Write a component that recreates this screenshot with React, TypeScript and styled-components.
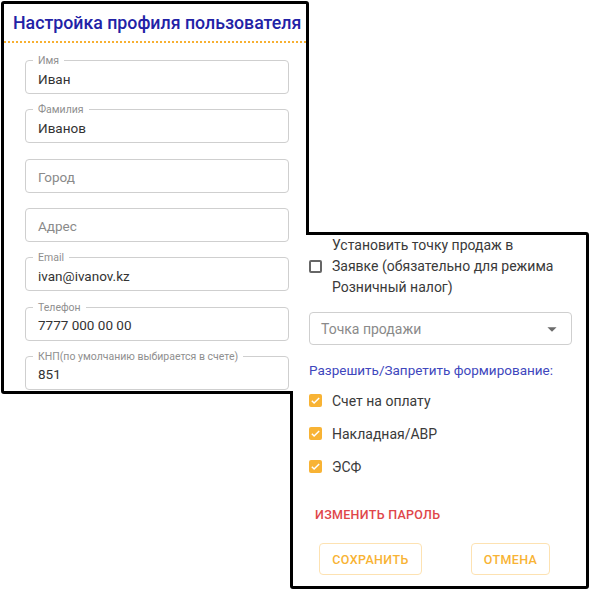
import React from 'react';
import styled, { createGlobalStyle } from 'styled-components';

const GlobalStyle = createGlobalStyle`
    html, body {
        margin: 0;
        padding: 0;
        background: #fff;
    }
    body {
        font-family: Roboto, 'Noto Sans', 'Liberation Sans', sans-serif;
        color: #333;
    }
    * {
        box-sizing: border-box;
    }
`;

// two screen clips laid over each other, like windows on a desktop
const Canvas = styled.div`
    width: 590px;
    height: 590px;
    padding: 1px 0 0 1px;
    display: grid;
    grid-template-columns: 289px 19px 280px;
    grid-template-rows: 231px 162px 195px;
`;

const Panel = styled.section`
    border: 3px solid #000;
    border-radius: 3px;
    background: #fff;
    overflow: hidden;
    display: flex;
    flex-direction: column;
`;

const ProfilePanel = styled(Panel)`
    grid-column: 1 / 3;
    grid-row: 1 / 3;
    z-index: 1;
`;

const OptionsPanel = styled(Panel)`
    grid-column: 2 / 4;
    grid-row: 2 / 4;
    z-index: 2;
    padding: 0 14px 0 16px;
`;

// hides the inner borders where the two clips overlap
const Seam = styled.div`
    grid-column: 2;
    grid-row: 2;
    z-index: 3;
    background: #fff;
    clip-path: polygon(
        0 0,
        calc(100% - 3px) 0,
        calc(100% - 3px) 3px,
        100% 3px,
        100% 100%,
        3px 100%,
        3px calc(100% - 3px),
        0 calc(100% - 3px)
    );
`;

const Title = styled.h2`
    margin: 0;
    padding: 7px 0 6px 9px;
    font-size: 17.75px;
    line-height: 24px;
    font-weight: 500;
    color: #2222a6;
    white-space: nowrap;
    border-bottom: 2px dotted #f7b031;
`;

const FieldList = styled.div`
    display: flex;
    flex-direction: column;
    gap: 15.33px;
    padding: 17px 0 0 21px;
`;

const Field = styled.div`
    position: relative;
    width: 264px;
    height: 34px;
    flex: none;
    border: 1px solid #cfcfcf;
    border-radius: 4px;
    display: flex;
    align-items: center;
    padding: 3px 12px 0;
    font-size: 13.5px;
    color: #333;
`;

const FieldLabel = styled.span`
    position: absolute;
    top: -7px;
    left: 7px;
    padding: 0 5px;
    background: #fff;
    font-size: 10.5px;
    line-height: 13px;
    color: #8f8f8f;
    white-space: nowrap;
`;

const Placeholder = styled.span`
    color: #8a8a8a;
`;

const CheckRow = styled.label<{ height?: number }>`
    display: flex;
    align-items: center;
    gap: 10px;
    height: ${p => (p.height ? `${p.height}px` : 'auto')};
    font-size: 14px;
    color: #3a3a3a;
`;

const BoxMark = styled.span<{ checked?: boolean }>`
    width: 13px;
    height: 13px;
    flex: none;
    border-radius: 2px;
    display: flex;
    align-items: center;
    justify-content: center;
    background: ${p => (p.checked ? '#f8b334' : '#fff')};
    border: ${p => (p.checked ? 'none' : '2px solid #666')};
`;

const RetailText = styled.span`
    line-height: 21px;
`;

const Select = styled.div`
    margin-top: 14px;
    height: 33px;
    border: 1px solid #cfcfcf;
    border-radius: 4px;
    display: flex;
    align-items: center;
    justify-content: space-between;
    padding: 1px 8px 0 11px;
    font-size: 14px;
    color: #8a8a8a;
`;

const SectionTitle = styled.div`
    margin-top: 15px;
    margin-bottom: 4px;
    font-size: 13.5px;
    line-height: 20px;
    color: #4047bd;
`;

const LinkButton = styled.div`
    margin-top: 17px;
    height: 28px;
    display: flex;
    align-items: center;
    padding-left: 6px;
    font-size: 12.5px;
    font-weight: 500;
    letter-spacing: 0.3px;
    color: #e0464a;
`;

const ButtonRow = styled.div`
    margin-top: 15px;
    display: flex;
    gap: 49px;
    padding-left: 10px;
`;

const OutlineButton = styled.button<{ w: number }>`
    width: ${p => p.w}px;
    height: 32px;
    border: 1px solid #fde2b2;
    border-radius: 4px;
    background: #fff;
    font-family: inherit;
    font-size: 12.5px;
    font-weight: 500;
    letter-spacing: 0.4px;
    color: #f8b334;
    padding: 0;
`;

const Tick = () => (
    <svg width="11" height="11" viewBox="0 0 24 24">
        <path d="M4 12.5l5 5L20 6.5" fill="none" stroke="#fff" strokeWidth="3.2" />
    </svg>
);

const ArrowDrop = () => (
    <svg width="22" height="22" viewBox="0 0 24 24">
        <path d="M7 10l5 5 5-5z" fill="#6b6b6b" />
    </svg>
);

const fields = [
    { label: 'Имя', value: 'Иван' },
    { label: 'Фамилия', value: 'Иванов' },
    { placeholder: 'Город' },
    { placeholder: 'Адрес' },
    { label: 'Email', value: 'ivan@ivanov.kz' },
    { label: 'Телефон', value: '7777 000 00 00' },
    { label: 'КНП(по умолчанию выбирается в счете)', value: '851' },
];

const documents = ['Счет на оплату', 'Накладная/АВР', 'ЭСФ'];

const App = () => {
    return (
        <>
            <GlobalStyle />
            <Canvas>
                <ProfilePanel>
                    <Title>Настройка профиля пользователя</Title>
                    <FieldList>
                        {fields.map((f, i) => (
                            <Field key={i}>
                                {f.label && <FieldLabel>{f.label}</FieldLabel>}
                                {f.value ? f.value : <Placeholder>{f.placeholder}</Placeholder>}
                            </Field>
                        ))}
                    </FieldList>
                </ProfilePanel>
                <Seam />
                <OptionsPanel>
                    <CheckRow>
                        <BoxMark />
                        <RetailText>
                            Установить точку продаж в
                            <br />
                            Заявке (обязательно для режима
                            <br />
                            Розничный налог)
                        </RetailText>
                    </CheckRow>
                    <Select>
                        Точка продажи
                        <ArrowDrop />
                    </Select>
                    <SectionTitle>Разрешить/Запретить формирование:</SectionTitle>
                    {documents.map(d => (
                        <CheckRow key={d} height={33}>
                            <BoxMark checked>
                                <Tick />
                            </BoxMark>
                            {d}
                        </CheckRow>
                    ))}
                    <LinkButton>ИЗМЕНИТЬ ПАРОЛЬ</LinkButton>
                    <ButtonRow>
                        <OutlineButton w={103}>СОХРАНИТЬ</OutlineButton>
                        <OutlineButton w={79}>ОТМЕНА</OutlineButton>
                    </ButtonRow>
                </OptionsPanel>
            </Canvas>
        </>
    );
};

export default App;
